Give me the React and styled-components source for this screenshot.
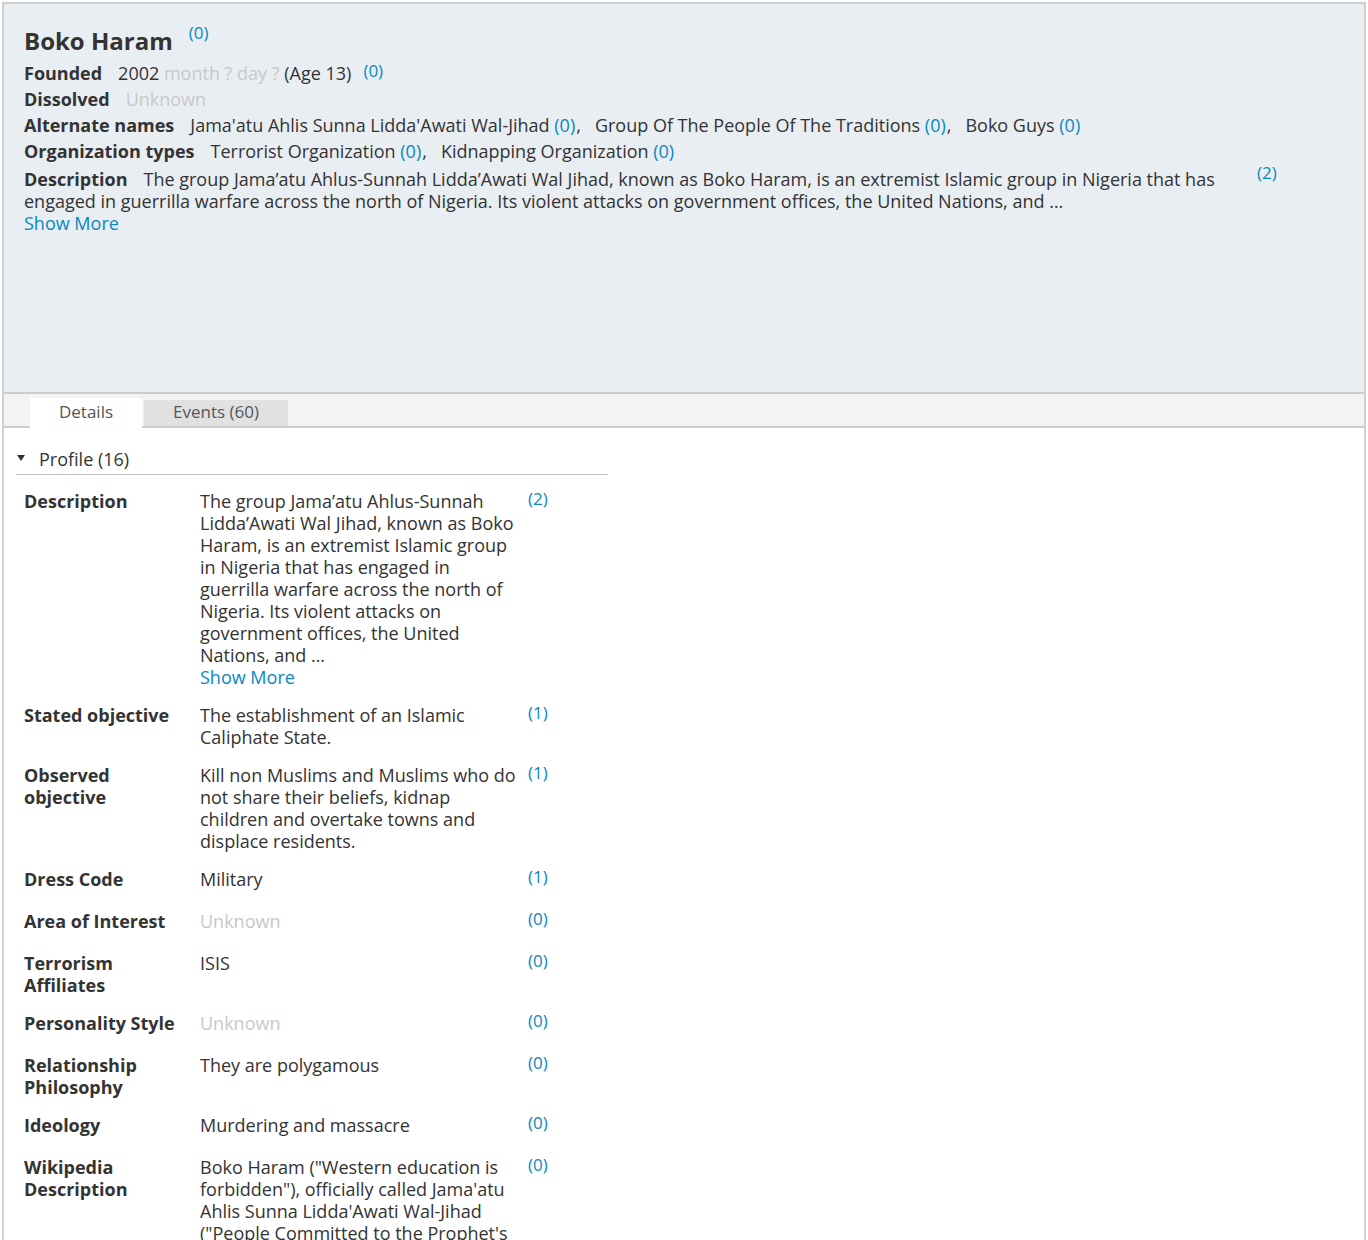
import React from "react";
import styled, { createGlobalStyle } from "styled-components";

const GlobalStyle = createGlobalStyle`
  html, body {
    margin: 0;
    padding: 0;
    background: #ffffff;
  }
  body {
    font-family: "Open Sans", "Liberation Sans", sans-serif;
    font-size: 18px;
    color: #333333;
  }
`;

const LINK = "#0a88c0";

const profile = [
  {
    label: "Description",
    value:
      "The group Jama\u2019atu Ahlus-Sunnah Lidda\u2019Awati Wal Jihad, known as Boko Haram, is an extremist Islamic group in Nigeria that has engaged in guerrilla warfare across the north of Nigeria. Its violent attacks on government offices, the United Nations, and \u2026",
    more: true,
    count: 2,
  },
  { label: "Stated objective", value: "The establishment of an Islamic Caliphate State.", count: 1 },
  {
    label: "Observed objective",
    value:
      "Kill non Muslims and Muslims who do not share their beliefs, kidnap children and overtake towns and displace residents.",
    count: 1,
  },
  { label: "Dress Code", value: "Military", count: 1 },
  { label: "Area of Interest", value: "Unknown", muted: true, count: 0 },
  { label: "Terrorism Affiliates", value: "ISIS", count: 0 },
  { label: "Personality Style", value: "Unknown", muted: true, count: 0 },
  { label: "Relationship Philosophy", value: "They are polygamous", count: 0 },
  { label: "Ideology", value: "Murdering and massacre", count: 0 },
  {
    label: "Wikipedia Description",
    value:
      "Boko Haram (\"Western education is forbidden\"), officially called Jama'atu Ahlis Sunna Lidda'Awati Wal-Jihad (\"People Committed to the Prophet's Teachings for Propagation and Jihad\"), is an Islamic extremist group based in northeastern Nigeria, also active in Chad, Niger and northern Cameroon.",
    count: 0,
  },
];

const altNames = [
  "Jama'atu Ahlis Sunna Lidda'Awati Wal-Jihad",
  "Group Of The People Of The Traditions",
  "Boko Guys",
];

const orgTypes = ["Terrorist Organization", "Kidnapping Organization"];

const App = () => {
  return (
    <>
      <GlobalStyle />
      <Frame>
        <Header>
          <TitleRow>
            <Title>Boko Haram</Title>
            <Count $raise={9} $gap={16}>(0)</Count>
          </TitleRow>

          <Field>
            <Label>Founded</Label>
            2002 <Muted>month ? day ?</Muted> (Age 13)
            <Count $raise={3} $gap={12}>(0)</Count>
          </Field>
          <Field>
            <Label>Dissolved</Label>
            <Muted>Unknown</Muted>
          </Field>
          <Field>
            <Label>Alternate names</Label>
            <ItemList items={altNames} />
          </Field>
          <Field>
            <Label>Organization types</Label>
            <ItemList items={orgTypes} />
          </Field>

          <DescRow>
            <DescText>
              <Label>Description</Label>
              The group Jama{"\u2019"}atu Ahlus-Sunnah Lidda{"\u2019"}Awati Wal Jihad, known as Boko Haram, is an
              extremist Islamic group in Nigeria that has engaged in guerrilla warfare across the north of Nigeria.
              Its violent attacks on government offices, the United Nations, and {"\u2026"}
              <br />
              <MoreLink>Show More</MoreLink>
            </DescText>
            <Count $raise={4} $gap={18}>(2)</Count>
          </DescRow>
        </Header>

        <TabBar>
          <Tab $active>Details</Tab>
          <Tab $width={144}>Events (60)</Tab>
        </TabBar>

        <Content>
          <Section>
            <SectionHead>
              <Caret />
              Profile (16)
            </SectionHead>
            <Table>
              {profile.map(row => (
                <Row key={row.label}>
                  <RowLabel>{row.label}</RowLabel>
                  <RowValue $muted={row.muted}>
                    {row.value}
                    {row.more && (
                      <>
                        <br />
                        <MoreLink>Show More</MoreLink>
                      </>
                    )}
                  </RowValue>
                  <RowCount>({row.count})</RowCount>
                </Row>
              ))}
            </Table>
          </Section>
        </Content>
      </Frame>
    </>
  );
};

const ItemList = ({ items }) => (
  <>
    {items.map((item, i) => (
      <Item key={item}>
        {item} <Count $size={18}>(0)</Count>
        {i < items.length - 1 && <Sep>,</Sep>}
      </Item>
    ))}
  </>
);

const Frame = styled.div`
  margin: 2px 2px 0;
  border: 2px solid #cfcfcf;
  border-bottom: none;
  min-height: 1236px;
  box-sizing: border-box;
`;

const Header = styled.header`
  height: 390px;
  box-sizing: border-box;
  background: #e9eef3;
  border-bottom: 2px solid #cccccc;
  padding: 20px 20px 0;
`;

const TitleRow = styled.div`
  display: flex;
  align-items: center;
  height: 34px;
  margin-bottom: 2px;
`;

const Title = styled.h1`
  margin: 0;
  font-size: 24px;
  font-weight: 700;
  color: #333333;
  line-height: 34px;
`;

const Count = styled.span`
  color: ${LINK};
  font-size: ${p => p.$size || 17}px;
  line-height: 1;
  position: relative;
  top: ${p => (p.$raise ? -p.$raise : 0)}px;
  margin-left: ${p => p.$gap || 0}px;
  white-space: nowrap;
`;

const Field = styled.div`
  line-height: 26px;
  white-space: nowrap;
`;

const Label = styled.span`
  font-weight: 700;
  margin-right: 16px;
`;

const Muted = styled.span`
  color: #c8c8c8;
`;

const Item = styled.span`
  display: inline;
`;

const Sep = styled.span`
  margin-right: 14px;
  margin-left: 1px;
`;

const DescRow = styled.div`
  display: flex;
  align-items: flex-start;
  margin-top: 4px;
  line-height: 22px;
`;

const DescText = styled.div`
  width: 1215px;
`;

const MoreLink = styled.a`
  color: ${LINK};
  cursor: pointer;
`;

const TabBar = styled.nav`
  display: flex;
  align-items: flex-end;
  height: 32px;
  background: #f3f3f3;
  border-bottom: 2px solid #cccccc;
  padding-left: 26px;
`;

const Tab = styled.div`
  width: ${p => (p.$active ? 112 : p.$width)}px;
  height: ${p => (p.$active ? 30 : 26)}px;
  margin-bottom: ${p => (p.$active ? -2 : 0)}px;
  margin-right: 2px;
  display: flex;
  align-items: center;
  justify-content: center;
  padding-bottom: 4px;
  box-sizing: border-box;
  background: ${p => (p.$active ? "#ffffff" : "#e1e1e1")};
  color: #555555;
  font-size: 17px;
  cursor: pointer;
`;

const Content = styled.main`
  padding: 18px 12px 0;
`;

const Section = styled.section`
  width: 592px;
`;

const SectionHead = styled.div`
  display: flex;
  align-items: center;
  line-height: 26px;
  padding-bottom: 2px;
  border-bottom: 1px solid #bdbdbd;
  color: #333333;
`;

const Caret = styled.span`
  width: 0;
  height: 0;
  border-left: 4px solid transparent;
  border-right: 4px solid transparent;
  border-top: 6px solid #333333;
  margin: 0 14px 3px 1px;
`;

const Table = styled.div`
  display: flex;
  flex-direction: column;
  gap: 16px;
  padding: 15px 0 0 8px;
`;

const Row = styled.div`
  display: flex;
  align-items: flex-start;
  min-height: 26px;
  line-height: 22px;
`;

const RowLabel = styled.div`
  width: 160px;
  padding-right: 16px;
  font-weight: 700;
`;

const RowValue = styled.div`
  width: 320px;
  padding-right: 8px;
  color: ${p => (p.$muted ? "#c8c8c8" : "#333333")};
`;

const RowCount = styled.div`
  color: ${LINK};
  font-size: 17px;
  line-height: 18px;
`;

export default App;
